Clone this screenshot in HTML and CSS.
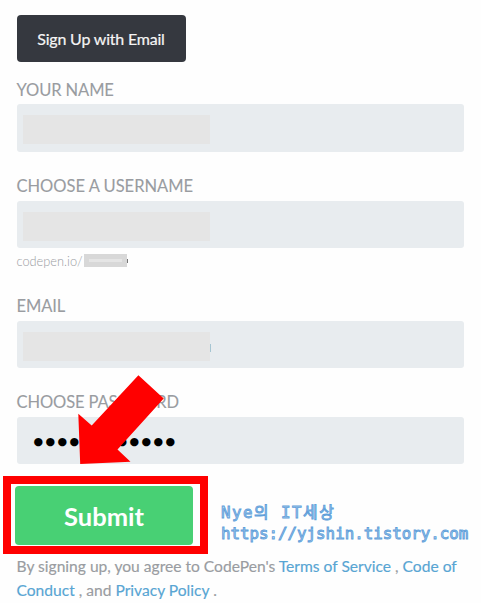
FILE: index.html
```html
<!DOCTYPE html>
<html lang="ko">
<head>
    <meta charset="UTF-8">
    <meta name="viewport" content="width=device-width, initial-scale=1.0">
    <title>Sign Up</title>
    <link rel="stylesheet" href="styles.css">
</head>
<body>
    <form class="signup">
        <button type="button" class="email-button">Sign Up with Email</button>
        <div class="group">
            <label class="label">YOUR NAME</label>
            <div class="field"><span class="mask"></span></div>
        </div>
        <div class="group username">
            <label class="label username-label">CHOOSE A USERNAME</label>
            <div class="field"><span class="mask"></span></div>
            <div class="hint">codepen.io/<span class="hint-mask"></span><span class="hint-rest"></span></div>
        </div>
        <div class="group email">
            <label class="label">EMAIL</label>
            <div class="field"><span class="mask"></span><span class="caret"></span></div>
        </div>
        <div class="group choose-password">
            <label class="label">CHOOSE PASSWORD</label>
            <div class="field"><span class="password">●●●●●●●●●●●●</span></div>
        </div>
        <div class="actions">
            <div class="highlight">
                <button type="button" class="submit-button">Submit</button>
            </div>
            <div class="watermark">
                <div class="blog-name">Nye의 IT세상</div>
                <div class="blog-url">https://yjshin.tistory.com</div>
            </div>
        </div>
        <p class="terms">By signing up, you agree to CodePen's <a>Terms of Service</a> , <a>Code of<br>Conduct</a> , and <a>Privacy Policy</a> .</p>
        <svg class="arrow" width="86" height="90" viewBox="0 0 86 90">
            <path d="M2.2 89 L0.3 38.8 L13.7 50.5 L60.4 0.3 L85.7 23.5 L39.5 74.5 L52.5 86.8 Z" fill="#ff0000"/>
        </svg>
    </form>
</body>
</html>
```
FILE: styles.css
```css
body {
    margin: 0;
    background: #fefefe;
    font-family: Lato, sans-serif;
    color: #999ca1;
}
.signup {
    position: relative;
    box-sizing: border-box;
    width: 481px;
    height: 603px;
    padding: 15px 17px 0 16.5px;
    overflow: hidden;
}
button {
    display: block;
    padding: 0;
    border: 0;
    font-family: inherit;
}
.email-button {
    width: 169px;
    height: 47px;
    margin-bottom: 17px;
    background: #35383f;
    border-radius: 4px;
    color: #f5f5f5;
    font-size: 16px;
    letter-spacing: -0.2px;
    -webkit-text-stroke: 0.2px #f5f5f5;
}
.group {
    height: 96px;
}
.username {
    height: 120px;
}
.choose-password {
    height: 76px;
}
.label {
    display: block;
    height: 25px;
    line-height: 23px;
    font-size: 16.5px;
    letter-spacing: -0.1px;
    white-space: nowrap;
    -webkit-text-stroke: 0.1px #999ca1;
}
.username-label {
    letter-spacing: 0;
}
.field {
    display: flex;
    align-items: center;
    height: 48px;
    background: #e8ecef;
    border-radius: 3px;
}
.username .field,
.email .field,
.choose-password .field {
    margin-top: 1px;
    height: 47px;
}
.mask {
    width: 187px;
    height: 29px;
    margin-left: 6px;
    margin-top: 3px;
    background: #e5e5e5;
}
.caret {
    width: 1px;
    height: 8px;
    margin-top: 7px;
    background: #a5c5d2;
}
.hint {
    display: flex;
    align-items: center;
    height: 26px;
    font-size: 12.8px;
    font-weight: 300;
}
.hint-mask {
    box-sizing: border-box;
    width: 43px;
    height: 13px;
    margin-top: -1px;
    margin-left: 1px;
    border: 5px solid #d8d8d8;
    background: #e5e5e5;
}
.hint-rest {
    width: 1px;
    height: 4px;
    background: #777;
}
.password {
    margin-left: 17px;
    margin-top: 2px;
    color: #000;
    font-family: "DejaVu Sans", sans-serif;
    font-size: 11px;
    letter-spacing: 2.4px;
}
.actions {
    display: flex;
    margin-top: 9px;
    margin-left: -13.5px;
}
.highlight {
    flex: none;
    box-sizing: border-box;
    width: 205px;
    height: 78px;
    padding: 2px 4px;
    border: 8px solid #ff0000;
}
.submit-button {
    width: 178px;
    height: 59px;
    background: #48d074;
    border-radius: 4px;
    color: #fff;
    font-size: 25.5px;
    font-weight: 700;
}
.watermark {
    margin: 26px 0 0 13px;
    color: #b5d3ef;
    font-family: "DejaVu Sans Mono", "Noto Sans CJK KR", monospace;
    font-size: 15.8px;
    line-height: 21px;
    white-space: nowrap;
    -webkit-text-stroke: 0.9px #609fda;
}
.blog-name {
    height: 21px;
    letter-spacing: 1.5px;
}
.terms {
    margin: 0;
    font-size: 15.6px;
    line-height: 24px;
    white-space: nowrap;
    -webkit-text-stroke: 0.15px;
}
.terms a {
    color: #58a5d3;
}
.arrow {
    position: absolute;
    left: 78px;
    top: 375px;
}
```
